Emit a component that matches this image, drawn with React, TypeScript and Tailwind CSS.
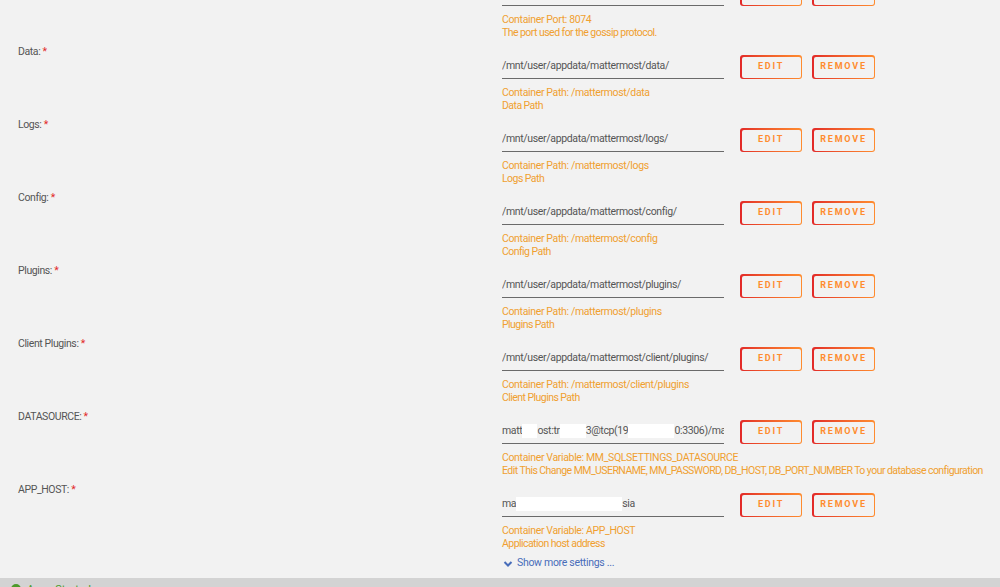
import React from "react";

type Row = {
  label: string;
  value: React.ReactNode;
  kind: string;
  desc: string;
};

const Blank = ({ w }: { w: number }) => (
  <span className="inline-block h-[14px] bg-white align-middle" style={{ width: w }} />
);

const rows: Row[] = [
  { label: "", value: "8074", kind: "Container Port: 8074", desc: "The port used for the gossip protocol." },
  { label: "Data", value: "/mnt/user/appdata/mattermost/data/", kind: "Container Path: /mattermost/data", desc: "Data Path" },
  { label: "Logs", value: "/mnt/user/appdata/mattermost/logs/", kind: "Container Path: /mattermost/logs", desc: "Logs Path" },
  { label: "Config", value: "/mnt/user/appdata/mattermost/config/", kind: "Container Path: /mattermost/config", desc: "Config Path" },
  { label: "Plugins", value: "/mnt/user/appdata/mattermost/plugins/", kind: "Container Path: /mattermost/plugins", desc: "Plugins Path" },
  {
    label: "Client Plugins",
    value: "/mnt/user/appdata/mattermost/client/plugins/",
    kind: "Container Path: /mattermost/client/plugins",
    desc: "Client Plugins Path",
  },
  {
    label: "DATASOURCE",
    value: (
      <>
        matt<Blank w={15} />ost:tr<Blank w={26} />3@tcp(19<Blank w={46} />0:3306)/mattermost
      </>
    ),
    kind: "Container Variable: MM_SQLSETTINGS_DATASOURCE",
    desc: "Edit This Change MM_USERNAME, MM_PASSWORD, DB_HOST, DB_PORT_NUMBER To your database configuration",
  },
  {
    label: "APP_HOST",
    value: (
      <>
        ma<Blank w={106} />sia
      </>
    ),
    kind: "Container Variable: APP_HOST",
    desc: "Application host address",
  },
];

function GradButton({ text, w }: { text: string; w: string }) {
  return (
    <div className={`${w} h-[24px] rounded-[3px] bg-gradient-to-r from-[#e22828] to-[#ff8c2f] p-[1.5px]`}>
      <div className="flex h-full w-full items-center justify-center rounded-[2px] bg-[#f2f2f2] text-[9px] font-bold tracking-[1.8px] text-[#ff8c2f]">
        {text}
      </div>
    </div>
  );
}

export default function App() {
  return (
    <div
      className="flex h-[587px] w-[1000px] flex-col overflow-hidden bg-[#f2f2f2] text-[#555]"
      style={{ fontFamily: "Roboto, 'Liberation Sans', sans-serif" }}
    >
      <div className="mt-[-28px]">
        {rows.map((r, i) => (
          <div key={i} className="flex h-[73px]">
            <div className="w-[502px] shrink-0 pl-[18px] text-[10.5px] leading-[14px] tracking-[-0.4px]">
              {r.label && (
                <>
                  {r.label}: <span className="text-[#e22828]">*</span>
                </>
              )}
            </div>
            <div className="flex flex-col">
              <div className="mt-[10px] flex items-start">
                <div className="h-[24px] w-[222px] overflow-hidden whitespace-nowrap border-b border-[#6a6a6a] text-[10.5px] leading-[22px] tracking-[-0.35px] text-[#555]">
                  {r.value}
                </div>
                <div className="ml-[16px] flex gap-[10px]">
                  <GradButton text="EDIT" w="w-[62px]" />
                  <GradButton text="REMOVE" w="w-[63px]" />
                </div>
              </div>
              <div className="mt-[7px] whitespace-nowrap text-[10.5px] leading-[13px] text-[#f0a030]">
                <div className="tracking-[-0.35px]">{r.kind}</div>
                <div className="tracking-[-0.55px]">{r.desc}</div>
              </div>
            </div>
          </div>
        ))}
      </div>
      <div className="flex items-center gap-[4px] pl-[503px] text-[10.5px] leading-[14px] tracking-[-0.3px] text-[#486dba]">
        <svg width="10" height="8" viewBox="0 0 10 8" className="mt-px">
          <path d="M1.5 2 L5 5.5 L8.5 2" fill="none" stroke="#486dba" strokeWidth="2" />
        </svg>
        <span>Show more settings ...</span>
      </div>
      <div className="mt-[8px] flex h-[9px] shrink-0 items-start overflow-hidden bg-[#d3d3d3] pl-[11px] pt-[5px]">
        <span className="mt-[1px] inline-block h-[10px] w-[10px] rounded-full bg-[#4c9a2a]" />
        <span className="ml-[6px] text-[11px] leading-[14px] text-[#4c9a2a]">Array Started</span>
      </div>
    </div>
  );
}
